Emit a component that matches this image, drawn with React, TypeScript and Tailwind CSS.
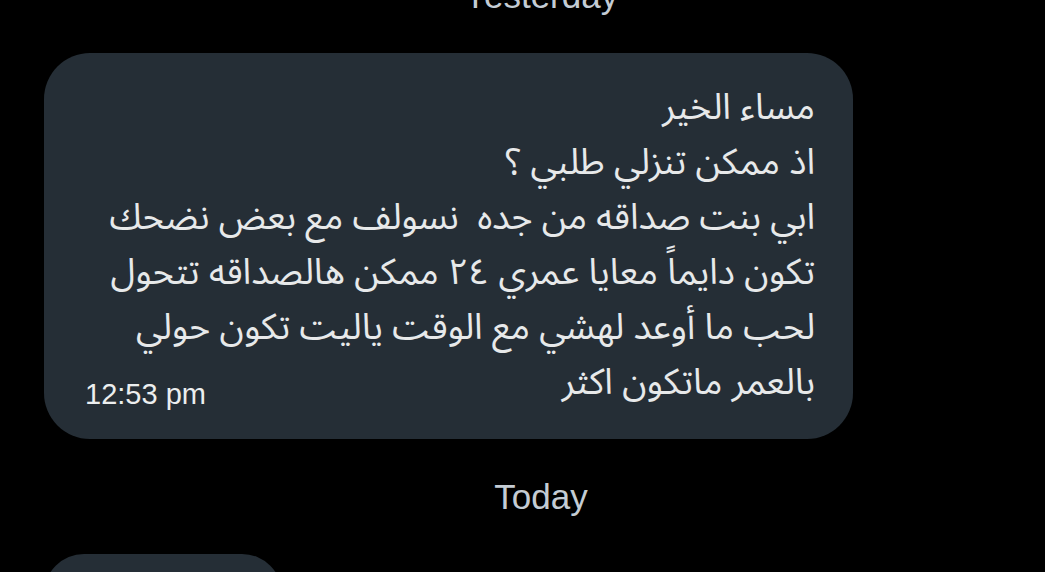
const lines = [
  'مساء الخير',
  'اذ ممكن تنزلي طلبي ؟',
  'ابي بنت صداقه من جده  نسولف مع بعض نضحك',
  'تكون دايماً معايا عمري ٢٤ ممكن هالصداقه تتحول',
  'لحب ما أوعد لهشي مع الوقت ياليت تكون حولي',
  'بالعمر ماتكون اكثر',
]

export default function App() {
  return (
    <div className="w-[1045px] h-[572px] overflow-hidden bg-black font-['Liberation_Sans','Roboto',sans-serif]">
      {/* Day separator (cut off at top) */}
      <div className="-mt-[24px] h-[40px] pl-[37px] text-center text-[35px] leading-[40px] text-[#c4ccd4]">
        Yesterday
      </div>

      {/* Received message */}
      <div className="ml-[44px] mt-[37px] grid h-[386px] w-[809px] rounded-[46px] bg-[#252e36] pb-[24px] pl-[41px] pr-[38px] pt-[28px]">
        <div
          dir="rtl"
          className="col-start-1 row-start-1 whitespace-pre text-right font-['Noto_Sans_Arabic','DejaVu_Sans',sans-serif] text-[36px] leading-[55px] text-[#e7e9ea]"
        >
          {lines.map((line, i) => (
            <div key={i}>{line}</div>
          ))}
        </div>
        <span className="col-start-1 row-start-1 mb-[6px] self-end justify-self-start whitespace-nowrap text-[29px] leading-none text-[#eceeef]">
          12:53 pm
        </span>
      </div>

      <div className="mt-[38px] pl-[37px] text-center text-[35px] leading-[40px] text-[#c4ccd4]">Today</div>

      {/* Next message, cut off */}
      <div className="ml-[44px] mt-[37px] h-[80px] w-[238px] rounded-[46px] bg-[#252e36]" />
    </div>
  )
}
